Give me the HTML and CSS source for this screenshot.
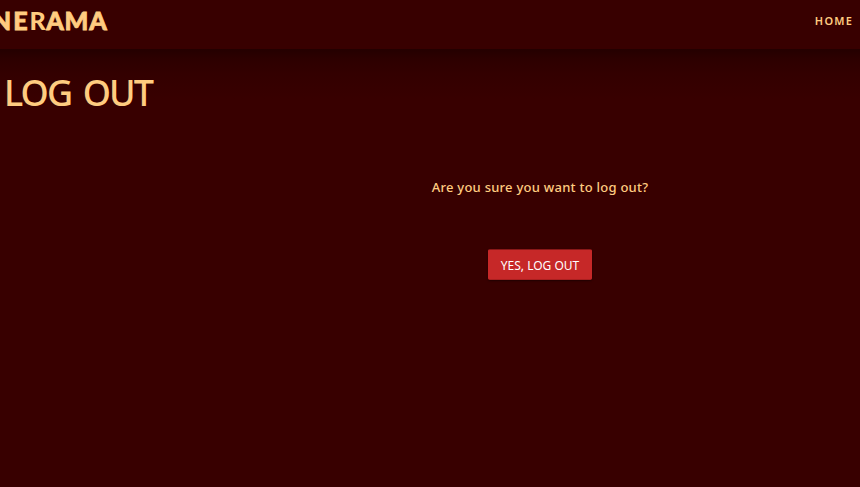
FILE: index.html
```html
<!DOCTYPE html>
<html lang="en">
<head>
<meta charset="utf-8">
<title>Log out</title>
<link rel="stylesheet" href="styles.css">
</head>
<body>
<header class="topbar">
  <div class="logo"><span class="n">N</span><span class="e">E</span><span class="r">R</span><span class="a">A</span><span class="m">M</span><span class="a">A</span></div>
  <nav><a class="home" href="#">HOME</a></nav>
</header>
<main>
  <h1>LOG OUT</h1>
  <form class="confirm">
    <p>Are you sure you want to log out?</p>
    <button type="button">YES, LOG OUT</button>
  </form>
</main>
</body>
</html>
```
FILE: styles.css
```css
* { box-sizing: border-box; }
body {
  margin: 0;
  height: 487px;
  overflow: hidden;
  background: #380000;
  color: #ffcc80;
  font-family: "Trebuchet MS", "Noto Sans", sans-serif;
}
.topbar {
  height: 49px;
  display: flex;
  justify-content: space-between;
  align-items: flex-start;
  padding: 5px 8px 0 0;
  overflow: hidden;
}
.logo {
  display: flex;
  margin-left: -9px;
  font: 900 25px/30px Broadway, Lato, sans-serif;
}
.logo span { display: flex; justify-content: center; -webkit-text-stroke: 0.8px #ffcc80; }
.logo .r { -webkit-text-stroke: 0; }
.n { width: 21px; }
.e { width: 17px; }
.r { width: 17px; }
.a { width: 18px; }
.m { width: 25px; }
.home {
  display: block;
  margin-right: -1px;
  color: inherit;
  text-decoration: none;
  font: 600 11px/32px "Trebuchet MS", "Noto Sans", sans-serif;
  letter-spacing: 1.2px;
}
main {
  height: 438px;
  background: linear-gradient(#240000, #2d0000 10px, #330000 25px, #380000 50px);
}
h1 {
  margin: 0;
  padding: 19px 0 0 4px;
  font-size: 36px;
  line-height: 50px;
  font-weight: 500;
  letter-spacing: -1.9px;
  word-spacing: 4px;
}
.confirm {
  width: 220px;
  margin: 58px 0 0 430px;
  display: flex;
  flex-direction: column;
  align-items: center;
}
p {
  margin: 0;
  font-size: 13px;
  line-height: 22px;
  font-weight: 500;
  letter-spacing: 0.25px;
  white-space: nowrap;
}
button {
  width: 104px;
  height: 31px;
  margin: 51px 0 0;
  padding: 2px 0 0;
  border: 1px solid #b32020;
  border-color: #8a1818 #c62828 #ab2020;
  border-radius: 2px;
  background: #c62828;
  box-shadow: 0 1px 2px #200000;
  color: #fff;
  font: 12px/20px "Trebuchet MS", "Noto Sans", sans-serif;
  white-space: nowrap;
}
```
